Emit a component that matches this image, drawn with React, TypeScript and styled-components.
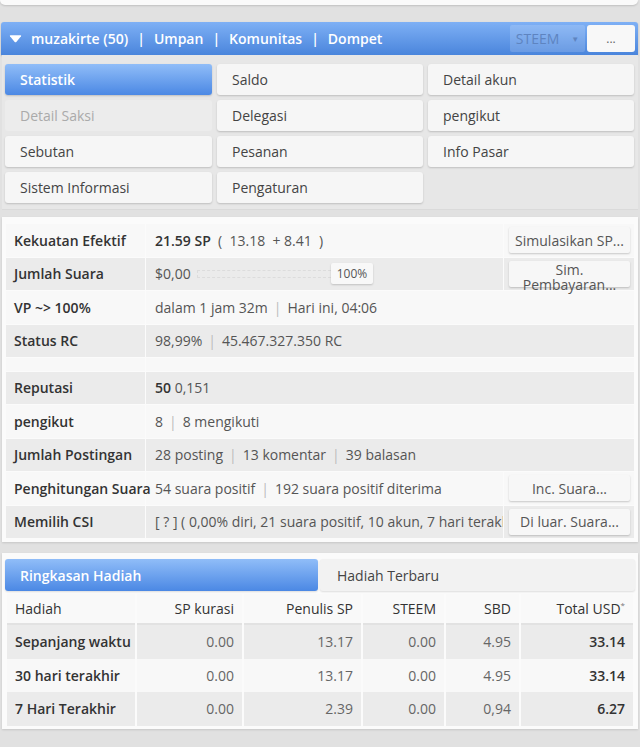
import styled, { createGlobalStyle, css } from 'styled-components'

const GlobalStyle = createGlobalStyle`
    body {
        margin: 0;
        background: #e1e1e1;
        font-family: "Open Sans", "Liberation Sans", sans-serif;
        font-size: 14px;
        color: #444;
    }
`

const Page = styled.div`
    width: 640px;
    padding-bottom: 12px;
`

const TopCard = styled.div`
    height: 5px;
    margin: 0 2px 0 0;
    background: #fafafa;
    border-radius: 0 0 5px 5px;
    box-shadow: 0 1px 2px rgba(0, 0, 0, 0.15);
`

const HeaderBar = styled.div`
    display: flex;
    align-items: center;
    height: 33px;
    margin: 17px 2px 0 1px;
    padding: 0 3px 0 8px;
    box-sizing: border-box;
    background: linear-gradient(#7eb0f5, #4a85dc);
    border-radius: 3px 3px 0 0;
    box-shadow: 0 1px 2px rgba(0, 0, 0, 0.2);
`

const NavLink = styled.span`
    color: #fff;
    font-weight: 600;
    font-size: 14px;
    white-space: nowrap;
`

const NavSep = styled.span`
    color: #fff;
    font-weight: 600;
    margin: 0 9px;
`

const UserToggle = styled.span`
    display: flex;
    align-items: center;
    gap: 9px;
`

const HeaderRight = styled.div`
    margin-left: auto;
    display: flex;
    gap: 2px;
    height: 27px;
`

const CurrencySelect = styled.div`
    width: 75px;
    display: flex;
    align-items: center;
    justify-content: center;
    gap: 12px;
    background: rgba(255, 255, 255, 0.16);
    border-radius: 2px;
    color: #5e84c0;
    font-size: 14px;
    span {
        font-size: 8px;
    }
`

const MoreButton = styled.div`
    width: 48px;
    display: flex;
    align-items: center;
    justify-content: center;
    background: #f8f8f8;
    border-radius: 3px;
    color: #666;
    font-size: 12px;
`

const MenuPanel = styled.div`
    display: grid;
    grid-template-columns: 207px 206px 206px;
    grid-auto-rows: 31px;
    gap: 5px 5px;
    margin: 0 2px;
    padding: 9px 3px 6px;
    background: #e7e7e7;
    border-bottom: 1px solid #dadada;
`

const MenuButton = styled.div<{ $active?: boolean; $disabled?: boolean }>`
    display: flex;
    align-items: center;
    padding-left: 15px;
    border-radius: 3px;
    background: #f6f6f6;
    color: #444;
    box-shadow: 0 1px 2px rgba(0, 0, 0, 0.18);
    ${({ $active }) => $active && css`
        background: linear-gradient(#90bdf8, #4b88e4);
        color: #fff;
        font-weight: 600;
    `}
    ${({ $disabled }) => $disabled && css`
        background: #ececec;
        color: #aaa;
        box-shadow: none;
    `}
`

const Card = styled.div<{ $top: number }>`
    margin: ${({ $top }) => $top}px 2px 0;
    padding: 6px 3px 3px;
    background: #fbfbfb;
    box-shadow: 0 1px 2px rgba(0, 0, 0, 0.12);
`

const StatsTable = styled.table`
    width: 100%;
    border-collapse: separate;
    border-spacing: 1px;
    table-layout: fixed;
`

const StatRow = styled.tr<{ $dark?: boolean }>`
    height: 32.5px;
    background: ${({ $dark }) => ($dark ? '#ebebeb' : '#f8f8f8')};
`

const SpacerRow = styled.tr`
    height: 12.5px;
    background: #f8f8f8;
`

const Label = styled.td`
    width: 131px;
    padding: 0 0 0 8px;
    font-weight: 600;
    color: #333;
    white-space: nowrap;
    overflow: visible;
`

const Value = styled.td`
    padding: 0 0 0 9px;
    color: #555;
    white-space: nowrap;
    overflow: hidden;
`

const Action = styled.td`
    width: 126px;
    padding: 0 4px 0 0;
    text-align: right;
    vertical-align: middle;
`

const ActionButton = styled.div<{ $twoLine?: boolean }>`
    display: inline-flex;
    align-items: center;
    justify-content: center;
    width: 121px;
    height: 26px;
    background: #f7f7f7;
    border-radius: 2px;
    box-shadow: 0 1px 2px rgba(0, 0, 0, 0.2);
    color: #555;
    white-space: nowrap;
    ${({ $twoLine }) => $twoLine && css`
        white-space: normal;
        text-align: center;
        line-height: 15px;
        align-items: flex-start;
        padding-top: 1px;
        box-sizing: border-box;
        overflow: visible;
    `}
`

const Strong = styled.b`
    font-weight: 600;
    color: #333;
`

const Pipe = styled.span`
    color: #bbb;
    margin: 0 6px;
`

const VoteWrap = styled.span`
    display: inline-flex;
    align-items: center;
`

const VoteBar = styled.span`
    display: inline-block;
    width: 134px;
    height: 8px;
    margin-left: 6px;
    border: 1px dashed #dcdcdc;
    border-right: none;
    box-sizing: border-box;
`

const VotePct = styled.span`
    display: inline-block;
    padding: 2px 6px;
    font-size: 12px;
    color: #555;
    background: #f8f8f8;
    border-radius: 2px;
    box-shadow: 0 1px 2px rgba(0, 0, 0, 0.18);
`

const Tabs = styled.div`
    display: grid;
    grid-template-columns: 313px 1fr;
    gap: 2px;
    height: 32px;
    margin: 0 0 3px;
`

const Tab = styled.div<{ $active?: boolean }>`
    display: flex;
    align-items: center;
    padding-left: ${({ $active }) => ($active ? 15 : 17)}px;
    border-radius: 3px;
    background: ${({ $active }) => ($active ? 'linear-gradient(#90bdf8, #4b88e4)' : '#f2f2f2')};
    color: ${({ $active }) => ($active ? '#fff' : '#444')};
    font-weight: ${({ $active }) => ($active ? 600 : 400)};
    box-shadow: 0 1px 2px rgba(0, 0, 0, 0.12);
`

const RewardTable = styled.table`
    width: 100%;
    border-collapse: separate;
    border-spacing: 2px 0;
    table-layout: fixed;
`

const HeadCell = styled.th<{ $w?: number; $left?: boolean }>`
    box-sizing: border-box;
    ${({ $w }) => $w && css`width: ${$w}px;`}
    height: 31px;
    padding: 0 8px;
    font-weight: 400;
    color: #333;
    text-align: ${({ $left }) => ($left ? 'left' : 'right')};
    background: #f9f9f9;
    border-bottom: 2px solid #e2e2e2;
    white-space: nowrap;
    sup {
        font-size: 8px;
        color: #777;
    }
`

const RewardRow = styled.tr<{ $dark?: boolean }>`
    height: 33.5px;
    background: ${({ $dark }) => ($dark ? '#ebebeb' : '#f8f8f8')};
`

const RewardCell = styled.td<{ $label?: boolean; $bold?: boolean }>`
    box-sizing: border-box;
    padding: 0 8px;
    text-align: ${({ $label }) => ($label ? 'left' : 'right')};
    color: ${({ $label, $bold }) => ($label || $bold ? '#333' : '#666')};
    font-weight: ${({ $label, $bold }) => ($label || $bold ? 600 : 400)};
    white-space: nowrap;
`

function Caret() {
    return (
        <svg width="13" height="9" viewBox="0 0 13 9">
            <path d="M1.5 1.2 H11.5 Q12.6 1.2 12 2.2 L7.3 7.9 Q6.5 8.7 5.7 7.9 L1 2.2 Q0.4 1.2 1.5 1.2 Z" fill="#fff" />
        </svg>
    )
}

const menuItems = [
    { text: 'Statistik', active: true },
    { text: 'Saldo' },
    { text: 'Detail akun' },
    { text: 'Detail Saksi', disabled: true },
    { text: 'Delegasi' },
    { text: 'pengikut' },
    { text: 'Sebutan' },
    { text: 'Pesanan' },
    { text: 'Info Pasar' },
    { text: 'Sistem Informasi' },
    { text: 'Pengaturan' },
]

const rewards = [
    { label: 'Sepanjang waktu', vals: ['0.00', '13.17', '0.00', '4.95'], total: '33.14' },
    { label: '30 hari terakhir', vals: ['0.00', '13.17', '0.00', '4.95'], total: '33.14' },
    { label: '7 Hari Terakhir', vals: ['0.00', '2.39', '0.00', '0,94'], total: '6.27' },
]

export default function App() {
    return (
        <Page>
            <GlobalStyle />
            <TopCard />
            <HeaderBar>
                <UserToggle>
                    <Caret />
                    <NavLink>muzakirte (50)</NavLink>
                </UserToggle>
                <NavSep>|</NavSep>
                <NavLink>Umpan</NavLink>
                <NavSep>|</NavSep>
                <NavLink>Komunitas</NavLink>
                <NavSep>|</NavSep>
                <NavLink>Dompet</NavLink>
                <HeaderRight>
                    <CurrencySelect>STEEM <span>▼</span></CurrencySelect>
                    <MoreButton>...</MoreButton>
                </HeaderRight>
            </HeaderBar>

            <MenuPanel>
                {menuItems.map((item, index) => (
                    <MenuButton key={index} $active={item.active} $disabled={item.disabled}>
                        {item.text}
                    </MenuButton>
                ))}
            </MenuPanel>

            <Card $top={7}>
                <StatsTable>
                    <tbody>
                        <StatRow>
                            <Label>Kekuatan Efektif</Label>
                            <Value><Strong>21.59 SP</Strong> &nbsp;( &nbsp;13.18 &nbsp;+ 8.41 &nbsp;)</Value>
                            <Action><ActionButton>Simulasikan SP...</ActionButton></Action>
                        </StatRow>
                        <StatRow $dark>
                            <Label>Jumlah Suara</Label>
                            <Value>
                                <VoteWrap>$0,00<VoteBar /><VotePct>100%</VotePct></VoteWrap>
                            </Value>
                            <Action><ActionButton $twoLine>Sim. Pembayaran...</ActionButton></Action>
                        </StatRow>
                        <StatRow>
                            <Label>VP ~&gt; 100%</Label>
                            <Value colSpan={2}>dalam 1 jam 32m<Pipe>|</Pipe>Hari ini, 04:06</Value>
                        </StatRow>
                        <StatRow $dark>
                            <Label>Status RC</Label>
                            <Value colSpan={2}>98,99%<Pipe>|</Pipe>45.467.327.350 RC</Value>
                        </StatRow>
                        <SpacerRow>
                            <td />
                            <td colSpan={2} />
                        </SpacerRow>
                        <StatRow $dark>
                            <Label>Reputasi</Label>
                            <Value colSpan={2}><Strong>50</Strong> 0,151</Value>
                        </StatRow>
                        <StatRow>
                            <Label>pengikut</Label>
                            <Value colSpan={2}>8<Pipe>|</Pipe>8 mengikuti</Value>
                        </StatRow>
                        <StatRow $dark>
                            <Label>Jumlah Postingan</Label>
                            <Value colSpan={2}>28 posting<Pipe>|</Pipe>13 komentar<Pipe>|</Pipe>39 balasan</Value>
                        </StatRow>
                        <StatRow>
                            <Label>Penghitungan Suara</Label>
                            <Value>54 suara positif<Pipe>|</Pipe>192 suara positif diterima</Value>
                            <Action><ActionButton>Inc. Suara...</ActionButton></Action>
                        </StatRow>
                        <StatRow $dark>
                            <Label>Memilih CSI</Label>
                            <Value>[ ? ] ( 0,00% diri, 21 suara positif, 10 akun, 7 hari terakhir )</Value>
                            <Action><ActionButton>Di luar. Suara...</ActionButton></Action>
                        </StatRow>
                    </tbody>
                </StatsTable>
            </Card>

            <Card $top={11}>
                <Tabs>
                    <Tab $active>Ringkasan Hadiah</Tab>
                    <Tab>Hadiah Terbaru</Tab>
                </Tabs>
                <RewardTable>
                    <thead>
                        <tr>
                            <HeadCell $w={128} $left>Hadiah</HeadCell>
                            <HeadCell $w={105}>SP kurasi</HeadCell>
                            <HeadCell $w={117}>Penulis SP</HeadCell>
                            <HeadCell $w={81}>STEEM</HeadCell>
                            <HeadCell $w={73}>SBD</HeadCell>
                            <HeadCell>Total USD<sup>*</sup></HeadCell>
                        </tr>
                    </thead>
                    <tbody>
                        {rewards.map((row, index) => (
                            <RewardRow key={index} $dark={index !== 1}>
                                <RewardCell $label>{row.label}</RewardCell>
                                {row.vals.map((v, i) => (
                                    <RewardCell key={i}>{v}</RewardCell>
                                ))}
                                <RewardCell $bold>{row.total}</RewardCell>
                            </RewardRow>
                        ))}
                    </tbody>
                </RewardTable>
            </Card>
        </Page>
    )
}
